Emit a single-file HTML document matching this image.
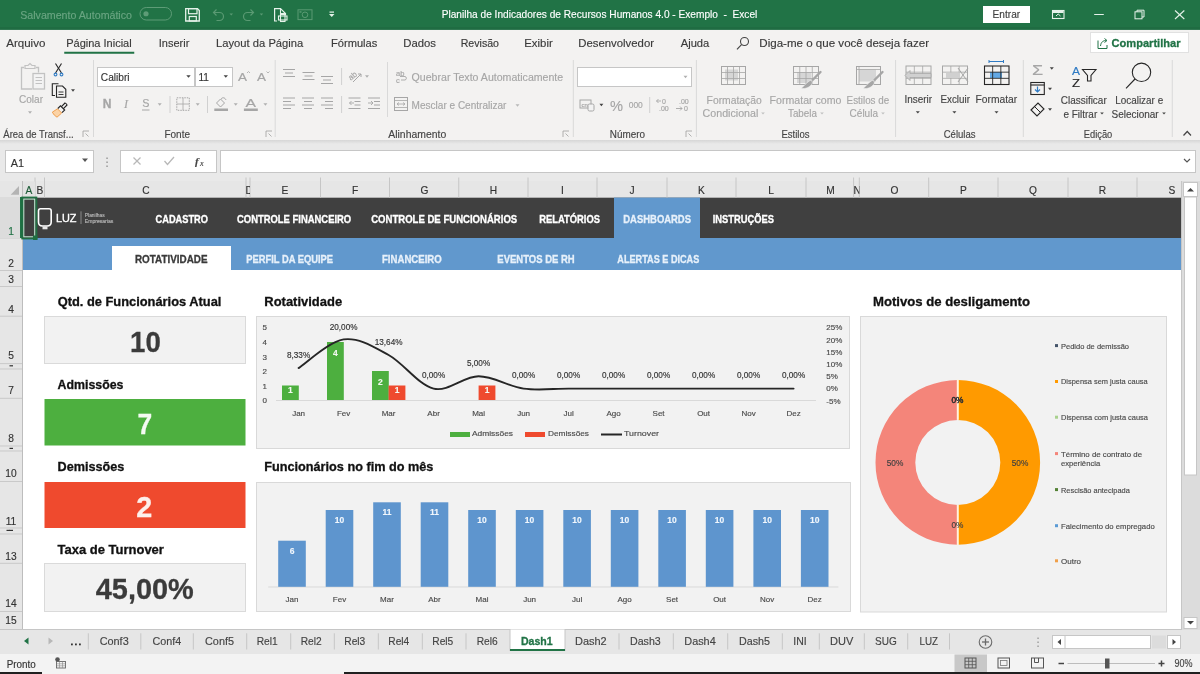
<!DOCTYPE html>
<html><head><meta charset="utf-8"><title>Excel</title>
<style>
html,body{margin:0;padding:0;width:1200px;height:674px;overflow:hidden;background:#fff;}
svg{display:block;font-family:"Liberation Sans", sans-serif;will-change:transform;}
</style></head><body>
<svg width="1200" height="674" viewBox="0 0 1200 674">
<rect x="0" y="29" width="1200" height="111" fill="#f3f2f1" />
<rect x="0" y="0" width="1200" height="29.7" fill="#217346" />
<rect x="0" y="27" width="1200" height="2.7" fill="#1f6c42" />
<defs><linearGradient id="sh" x1="0" y1="0" x2="0" y2="1"><stop offset="0" stop-color="#d6d6d6"/><stop offset="1" stop-color="#e9e9e9"/></linearGradient></defs>
<rect x="0" y="140" width="1200" height="4" fill="url(#sh)" />
<rect x="0" y="144" width="1200" height="37" fill="#e9e9e9" />
<rect x="5.5" y="150.5" width="88" height="22" fill="#fff" stroke="#c6c6c6" stroke-width="1" />
<rect x="120.5" y="150.5" width="96" height="22" fill="#fff" stroke="#c6c6c6" stroke-width="1" />
<rect x="220.5" y="150.5" width="975" height="22" fill="#fff" stroke="#c6c6c6" stroke-width="1" />
<rect x="0" y="181" width="1182" height="16" fill="#e6e6e6" />
<rect x="0" y="181" width="22" height="449" fill="#e6e6e6" />
<line x1="22.5" y1="181" x2="22.5" y2="630" stroke="#bdbdbd" stroke-width="1" />
<rect x="23" y="197" width="1159" height="433" fill="#ffffff" />
<rect x="23" y="197.6" width="1158" height="40.4" fill="#404040" />
<rect x="614" y="197.6" width="86" height="40.4" fill="#6198cd" />
<rect x="23" y="238" width="1158" height="32" fill="#6198cd" />
<rect x="112" y="246" width="119" height="24" fill="#ffffff" />
<rect x="44.5" y="316.5" width="201" height="47" fill="#f2f2f2" stroke="#dadada" stroke-width="1" />
<rect x="44.5" y="399" width="201" height="46.5" fill="#4daf3f" />
<rect x="44.5" y="482" width="201" height="46" fill="#ef4a2e" />
<rect x="44.5" y="563.5" width="201" height="48" fill="#f2f2f2" stroke="#dadada" stroke-width="1" />
<rect x="256.5" y="316.5" width="593" height="132" fill="#f2f2f2" stroke="#d9d9d9" stroke-width="1" />
<rect x="256.5" y="482.5" width="594" height="129" fill="#f2f2f2" stroke="#d9d9d9" stroke-width="1" />
<rect x="860.5" y="316.5" width="306" height="295.5" fill="#f2f2f2" stroke="#d9d9d9" stroke-width="1" />
<line x1="0" y1="629.5" x2="1182" y2="629.5" stroke="#c6c6c6" stroke-width="1" />
<rect x="0" y="630" width="1200" height="24" fill="#e6e6e6" />
<rect x="0" y="654" width="1200" height="20" fill="#f3f3f3" />
<rect x="0" y="672" width="42" height="2" fill="#202020" />
<rect x="344" y="672" width="856" height="2" fill="#202020" />
<rect x="1182" y="181" width="18" height="449" fill="#dcdcdc" />
<line x1="1181.5" y1="181" x2="1181.5" y2="630" stroke="#c6c6c6" stroke-width="1" />
<text x="20.2" y="18.8" font-size="11" fill="#6aa582" font-weight="normal" textLength="111.8" lengthAdjust="spacingAndGlyphs" stroke="#6aa582" stroke-width="0.15">Salvamento Automático</text>
<rect x="140" y="7.5" width="31.5" height="12.5" rx="6.25" fill="none" stroke="#5e9c77" stroke-width="1"/>
<circle cx="146" cy="13.75" r="2.6" fill="#5e9c77"/>
<text x="441.7" y="18.2" font-size="11.5" fill="#ffffff" font-weight="normal" textLength="315.6" lengthAdjust="spacingAndGlyphs" stroke="#ffffff" stroke-width="0.15">Planilha de Indicadores de Recursos Humanos 4.0 - Exemplo&#160; -&#160; Excel</text>
<rect x="983" y="6" width="47" height="17" fill="#ffffff"/>
<text x="992.6" y="18.2" font-size="11.5" fill="#404040" font-weight="normal" textLength="27.6" lengthAdjust="spacingAndGlyphs" stroke="#404040" stroke-width="0.15">Entrar</text>
<text x="6.2" y="47.1" font-size="11.3" fill="#3a3a3a" font-weight="normal" textLength="39.2" lengthAdjust="spacingAndGlyphs" stroke="#3a3a3a" stroke-width="0.15">Arquivo</text>
<text x="66.2" y="47.1" font-size="11.3" fill="#3a3a3a" font-weight="normal" textLength="65.5" lengthAdjust="spacingAndGlyphs" stroke="#3a3a3a" stroke-width="0.15">Página Inicial</text>
<text x="158.8" y="47.1" font-size="11.3" fill="#3a3a3a" font-weight="normal" textLength="30.5" lengthAdjust="spacingAndGlyphs" stroke="#3a3a3a" stroke-width="0.15">Inserir</text>
<text x="216.0" y="47.1" font-size="11.3" fill="#3a3a3a" font-weight="normal" textLength="87.3" lengthAdjust="spacingAndGlyphs" stroke="#3a3a3a" stroke-width="0.15">Layout da Página</text>
<text x="331.0" y="47.1" font-size="11.3" fill="#3a3a3a" font-weight="normal" textLength="46.3" lengthAdjust="spacingAndGlyphs" stroke="#3a3a3a" stroke-width="0.15">Fórmulas</text>
<text x="403.3" y="47.1" font-size="11.3" fill="#3a3a3a" font-weight="normal" textLength="32.7" lengthAdjust="spacingAndGlyphs" stroke="#3a3a3a" stroke-width="0.15">Dados</text>
<text x="460.7" y="47.1" font-size="11.3" fill="#3a3a3a" font-weight="normal" textLength="38.3" lengthAdjust="spacingAndGlyphs" stroke="#3a3a3a" stroke-width="0.15">Revisão</text>
<text x="524.3" y="47.1" font-size="11.3" fill="#3a3a3a" font-weight="normal" textLength="28.4" lengthAdjust="spacingAndGlyphs" stroke="#3a3a3a" stroke-width="0.15">Exibir</text>
<text x="578.3" y="47.1" font-size="11.3" fill="#3a3a3a" font-weight="normal" textLength="75.7" lengthAdjust="spacingAndGlyphs" stroke="#3a3a3a" stroke-width="0.15">Desenvolvedor</text>
<text x="680.7" y="47.1" font-size="11.3" fill="#3a3a3a" font-weight="normal" textLength="28.6" lengthAdjust="spacingAndGlyphs" stroke="#3a3a3a" stroke-width="0.15">Ajuda</text>
<text x="759.3" y="47.1" font-size="11.3" fill="#3a3a3a" font-weight="normal" textLength="169.7" lengthAdjust="spacingAndGlyphs" stroke="#3a3a3a" stroke-width="0.15">Diga-me o que você deseja fazer</text>
<rect x="64.25" y="51.75" width="70" height="2" fill="#217346" />
<rect x="1090.5" y="32.5" width="98" height="20" fill="#ffffff" stroke="#e1e1e1" stroke-width="1" />
<text x="1111.5" y="47.0" font-size="11.5" fill="#217346" font-weight="600" textLength="69.0" lengthAdjust="spacingAndGlyphs" stroke="#217346" stroke-width="0.3">Compartilhar</text>
<text x="3.3" y="137.6" font-size="11" fill="#444" font-weight="normal" textLength="70.4" lengthAdjust="spacingAndGlyphs" stroke="#444" stroke-width="0.15">Área de Transf...</text>
<text x="164.4" y="137.6" font-size="11" fill="#444" font-weight="normal" textLength="25.6" lengthAdjust="spacingAndGlyphs" stroke="#444" stroke-width="0.15">Fonte</text>
<text x="388.3" y="137.6" font-size="11" fill="#444" font-weight="normal" textLength="57.9" lengthAdjust="spacingAndGlyphs" stroke="#444" stroke-width="0.15">Alinhamento</text>
<text x="609.8" y="137.6" font-size="11" fill="#444" font-weight="normal" textLength="35.2" lengthAdjust="spacingAndGlyphs" stroke="#444" stroke-width="0.15">Número</text>
<text x="781.4" y="137.6" font-size="11" fill="#444" font-weight="normal" textLength="28.1" lengthAdjust="spacingAndGlyphs" stroke="#444" stroke-width="0.15">Estilos</text>
<text x="943.7" y="137.6" font-size="11" fill="#444" font-weight="normal" textLength="31.8" lengthAdjust="spacingAndGlyphs" stroke="#444" stroke-width="0.15">Células</text>
<text x="1083.8" y="137.6" font-size="11" fill="#444" font-weight="normal" textLength="28.5" lengthAdjust="spacingAndGlyphs" stroke="#444" stroke-width="0.15">Edição</text>
<line x1="93.5" y1="60" x2="93.5" y2="137" stroke="#d9d9d9" stroke-width="1" />
<line x1="275.2" y1="60" x2="275.2" y2="137" stroke="#d9d9d9" stroke-width="1" />
<line x1="573.3" y1="60" x2="573.3" y2="137" stroke="#d9d9d9" stroke-width="1" />
<line x1="696.4" y1="60" x2="696.4" y2="137" stroke="#d9d9d9" stroke-width="1" />
<line x1="895.6" y1="60" x2="895.6" y2="137" stroke="#d9d9d9" stroke-width="1" />
<line x1="1023.3" y1="60" x2="1023.3" y2="137" stroke="#d9d9d9" stroke-width="1" />
<line x1="1172.25" y1="60" x2="1172.25" y2="137" stroke="#d9d9d9" stroke-width="1" />
<text x="19.0" y="103.0" font-size="11" fill="#a6a6a6" font-weight="normal" textLength="24.0" lengthAdjust="spacingAndGlyphs" stroke="#a6a6a6" stroke-width="0.15">Colar</text>
<text x="411.6" y="81.0" font-size="11" fill="#a6a6a6" font-weight="normal" textLength="151.6" lengthAdjust="spacingAndGlyphs" stroke="#a6a6a6" stroke-width="0.15">Quebrar Texto Automaticamente</text>
<text x="411.6" y="109.4" font-size="11" fill="#a6a6a6" font-weight="normal" textLength="94.8" lengthAdjust="spacingAndGlyphs" stroke="#a6a6a6" stroke-width="0.15">Mesclar e Centralizar</text>
<text x="706.6" y="103.6" font-size="11" fill="#a6a6a6" font-weight="normal" textLength="55.2" lengthAdjust="spacingAndGlyphs" stroke="#a6a6a6" stroke-width="0.15">Formatação</text>
<text x="702.6" y="117.1" font-size="11" fill="#a6a6a6" font-weight="normal" textLength="55.7" lengthAdjust="spacingAndGlyphs" stroke="#a6a6a6" stroke-width="0.15">Condicional</text>
<text x="769.6" y="103.6" font-size="11" fill="#a6a6a6" font-weight="normal" textLength="71.8" lengthAdjust="spacingAndGlyphs" stroke="#a6a6a6" stroke-width="0.15">Formatar como</text>
<text x="788.0" y="117.1" font-size="11" fill="#a6a6a6" font-weight="normal" textLength="28.9" lengthAdjust="spacingAndGlyphs" stroke="#a6a6a6" stroke-width="0.15">Tabela</text>
<text x="846.6" y="103.6" font-size="11" fill="#a6a6a6" font-weight="normal" textLength="42.6" lengthAdjust="spacingAndGlyphs" stroke="#a6a6a6" stroke-width="0.15">Estilos de</text>
<text x="849.6" y="117.1" font-size="11" fill="#a6a6a6" font-weight="normal" textLength="28.4" lengthAdjust="spacingAndGlyphs" stroke="#a6a6a6" stroke-width="0.15">Célula</text>
<text x="904.4" y="103.1" font-size="11" fill="#444" font-weight="normal" textLength="27.6" lengthAdjust="spacingAndGlyphs" stroke="#444" stroke-width="0.15">Inserir</text>
<text x="940.5" y="103.1" font-size="11" fill="#444" font-weight="normal" textLength="29.4" lengthAdjust="spacingAndGlyphs" stroke="#444" stroke-width="0.15">Excluir</text>
<text x="975.5" y="103.1" font-size="11" fill="#444" font-weight="normal" textLength="41.7" lengthAdjust="spacingAndGlyphs" stroke="#444" stroke-width="0.15">Formatar</text>
<text x="1060.8" y="103.5" font-size="11" fill="#444" font-weight="normal" textLength="45.9" lengthAdjust="spacingAndGlyphs" stroke="#444" stroke-width="0.15">Classificar</text>
<text x="1063.5" y="117.5" font-size="11" fill="#444" font-weight="normal" textLength="33.7" lengthAdjust="spacingAndGlyphs" stroke="#444" stroke-width="0.15">e Filtrar</text>
<text x="1115.2" y="103.5" font-size="11" fill="#444" font-weight="normal" textLength="48.0" lengthAdjust="spacingAndGlyphs" stroke="#444" stroke-width="0.15">Localizar e</text>
<text x="1111.5" y="117.5" font-size="11" fill="#444" font-weight="normal" textLength="47.2" lengthAdjust="spacingAndGlyphs" stroke="#444" stroke-width="0.15">Selecionar</text>
<rect x="97.5" y="67.5" width="97" height="19" fill="#ffffff" stroke="#c6c6c6" stroke-width="1" />
<rect x="195.5" y="67.5" width="37" height="19" fill="#ffffff" stroke="#c6c6c6" stroke-width="1" />
<text x="100.8" y="81.2" font-size="11.5" fill="#333" font-weight="normal" textLength="28.8" lengthAdjust="spacingAndGlyphs" stroke="#333" stroke-width="0.15">Calibri</text>
<text x="198.5" y="81.2" font-size="11.5" fill="#333" font-weight="normal" textLength="10.5" lengthAdjust="spacingAndGlyphs" stroke="#333" stroke-width="0.15">11</text>
<rect x="577.5" y="67.5" width="114" height="19" fill="#ffffff" stroke="#c6c6c6" stroke-width="1" />
<text x="10.7" y="166.7" font-size="11.5" fill="#333" font-weight="normal" textLength="13.3" lengthAdjust="spacingAndGlyphs" stroke="#333" stroke-width="0.15">A1</text>
<line x1="35" y1="177.5" x2="35" y2="197.5" stroke="#c6c6c6" stroke-width="1" />
<line x1="44.5" y1="177.5" x2="44.5" y2="197.5" stroke="#c6c6c6" stroke-width="1" />
<line x1="246" y1="177.5" x2="246" y2="197.5" stroke="#c6c6c6" stroke-width="1" />
<line x1="250" y1="177.5" x2="250" y2="197.5" stroke="#c6c6c6" stroke-width="1" />
<line x1="320.5" y1="177.5" x2="320.5" y2="197.5" stroke="#c6c6c6" stroke-width="1" />
<line x1="389.5" y1="177.5" x2="389.5" y2="197.5" stroke="#c6c6c6" stroke-width="1" />
<line x1="458.75" y1="177.5" x2="458.75" y2="197.5" stroke="#c6c6c6" stroke-width="1" />
<line x1="528" y1="177.5" x2="528" y2="197.5" stroke="#c6c6c6" stroke-width="1" />
<line x1="597" y1="177.5" x2="597" y2="197.5" stroke="#c6c6c6" stroke-width="1" />
<line x1="667" y1="177.5" x2="667" y2="197.5" stroke="#c6c6c6" stroke-width="1" />
<line x1="736" y1="177.5" x2="736" y2="197.5" stroke="#c6c6c6" stroke-width="1" />
<line x1="806" y1="177.5" x2="806" y2="197.5" stroke="#c6c6c6" stroke-width="1" />
<line x1="853.6" y1="177.5" x2="853.6" y2="197.5" stroke="#c6c6c6" stroke-width="1" />
<line x1="859.3" y1="177.5" x2="859.3" y2="197.5" stroke="#c6c6c6" stroke-width="1" />
<line x1="928.7" y1="177.5" x2="928.7" y2="197.5" stroke="#c6c6c6" stroke-width="1" />
<line x1="998" y1="177.5" x2="998" y2="197.5" stroke="#c6c6c6" stroke-width="1" />
<line x1="1068" y1="177.5" x2="1068" y2="197.5" stroke="#c6c6c6" stroke-width="1" />
<line x1="1137" y1="177.5" x2="1137" y2="197.5" stroke="#c6c6c6" stroke-width="1" />
<clipPath id="cD"><rect x="246" y="181" width="4" height="16"/></clipPath><clipPath id="cN"><rect x="853.6" y="181" width="5.7" height="16"/></clipPath>
<g clip-path="url(#cD)"><text x="245.5" y="193.7" font-size="10.2" fill="#333" stroke="#333" stroke-width="0.15">D</text></g>
<g clip-path="url(#cN)"><text x="853.5" y="193.7" font-size="10.2" fill="#333" stroke="#333" stroke-width="0.15">N</text></g>
<text x="40.0" y="193.7" font-size="10.2" fill="#333" font-weight="normal" text-anchor="middle" stroke="#333" stroke-width="0.15">B</text>
<text x="146.0" y="193.7" font-size="10.2" fill="#333" font-weight="normal" text-anchor="middle" stroke="#333" stroke-width="0.15">C</text>
<text x="285.0" y="193.7" font-size="10.2" fill="#333" font-weight="normal" text-anchor="middle" stroke="#333" stroke-width="0.15">E</text>
<text x="355.0" y="193.7" font-size="10.2" fill="#333" font-weight="normal" text-anchor="middle" stroke="#333" stroke-width="0.15">F</text>
<text x="424.5" y="193.7" font-size="10.2" fill="#333" font-weight="normal" text-anchor="middle" stroke="#333" stroke-width="0.15">G</text>
<text x="493.5" y="193.7" font-size="10.2" fill="#333" font-weight="normal" text-anchor="middle" stroke="#333" stroke-width="0.15">H</text>
<text x="562.5" y="193.7" font-size="10.2" fill="#333" font-weight="normal" text-anchor="middle" stroke="#333" stroke-width="0.15">I</text>
<text x="632.0" y="193.7" font-size="10.2" fill="#333" font-weight="normal" text-anchor="middle" stroke="#333" stroke-width="0.15">J</text>
<text x="701.5" y="193.7" font-size="10.2" fill="#333" font-weight="normal" text-anchor="middle" stroke="#333" stroke-width="0.15">K</text>
<text x="771.0" y="193.7" font-size="10.2" fill="#333" font-weight="normal" text-anchor="middle" stroke="#333" stroke-width="0.15">L</text>
<text x="830.4" y="193.7" font-size="10.2" fill="#333" font-weight="normal" text-anchor="middle" stroke="#333" stroke-width="0.15">M</text>
<text x="894.4" y="193.7" font-size="10.2" fill="#333" font-weight="normal" text-anchor="middle" stroke="#333" stroke-width="0.15">O</text>
<text x="963.5" y="193.7" font-size="10.2" fill="#333" font-weight="normal" text-anchor="middle" stroke="#333" stroke-width="0.15">P</text>
<text x="1033.0" y="193.7" font-size="10.2" fill="#333" font-weight="normal" text-anchor="middle" stroke="#333" stroke-width="0.15">Q</text>
<text x="1102.5" y="193.7" font-size="10.2" fill="#333" font-weight="normal" text-anchor="middle" stroke="#333" stroke-width="0.15">R</text>
<text x="1172.0" y="193.7" font-size="10.2" fill="#333" font-weight="normal" text-anchor="middle" stroke="#333" stroke-width="0.15">S</text>
<rect x="23" y="181.5" width="12" height="15.5" fill="#e2e2e2" />
<text x="28.8" y="193.7" font-size="10.2" fill="#1d5c38" font-weight="normal" text-anchor="middle" stroke="#1d5c38" stroke-width="0.15">A</text>
<line x1="0" y1="238" x2="22" y2="238" stroke="#c9c9c9" stroke-width="1" />
<line x1="0" y1="270.5" x2="22" y2="270.5" stroke="#c9c9c9" stroke-width="1" />
<line x1="0" y1="286.5" x2="22" y2="286.5" stroke="#c9c9c9" stroke-width="1" />
<line x1="0" y1="316.2" x2="22" y2="316.2" stroke="#c9c9c9" stroke-width="1" />
<line x1="0" y1="363.6" x2="22" y2="363.6" stroke="#c9c9c9" stroke-width="1" />
<line x1="0" y1="369" x2="22" y2="369" stroke="#c9c9c9" stroke-width="1" />
<line x1="0" y1="398.3" x2="22" y2="398.3" stroke="#c9c9c9" stroke-width="1" />
<line x1="0" y1="446" x2="22" y2="446" stroke="#c9c9c9" stroke-width="1" />
<line x1="0" y1="451" x2="22" y2="451" stroke="#c9c9c9" stroke-width="1" />
<line x1="0" y1="481.5" x2="22" y2="481.5" stroke="#c9c9c9" stroke-width="1" />
<line x1="0" y1="528" x2="22" y2="528" stroke="#c9c9c9" stroke-width="1" />
<line x1="0" y1="534" x2="22" y2="534" stroke="#c9c9c9" stroke-width="1" />
<line x1="0" y1="563.3" x2="22" y2="563.3" stroke="#c9c9c9" stroke-width="1" />
<line x1="0" y1="611.5" x2="22" y2="611.5" stroke="#c9c9c9" stroke-width="1" />
<rect x="0" y="197" width="22" height="41" fill="#dcdcdc" />
<rect x="9.5" y="365.2" width="3.5" height="1.2" fill="#333" />
<rect x="9.5" y="447.8" width="3.5" height="1.2" fill="#333" />
<rect x="9.5" y="529.8" width="3.5" height="1.2" fill="#333" />
<rect x="6.5" y="529.8" width="3.5" height="1.2" fill="#333" />
<line x1="21" y1="197" x2="21" y2="238" stroke="#217346" stroke-width="2" />
<text x="11.0" y="235.3" font-size="10.2" fill="#217346" font-weight="normal" text-anchor="middle" stroke="#217346" stroke-width="0.15">1</text>
<text x="11.0" y="267.2" font-size="10.2" fill="#333" font-weight="normal" text-anchor="middle" stroke="#333" stroke-width="0.15">2</text>
<text x="11.0" y="282.7" font-size="10.2" fill="#333" font-weight="normal" text-anchor="middle" stroke="#333" stroke-width="0.15">3</text>
<text x="11.0" y="312.5" font-size="10.2" fill="#333" font-weight="normal" text-anchor="middle" stroke="#333" stroke-width="0.15">4</text>
<text x="11.0" y="359.2" font-size="10.2" fill="#333" font-weight="normal" text-anchor="middle" stroke="#333" stroke-width="0.15">5</text>
<text x="11.0" y="394.3" font-size="10.2" fill="#333" font-weight="normal" text-anchor="middle" stroke="#333" stroke-width="0.15">7</text>
<text x="11.0" y="441.7" font-size="10.2" fill="#333" font-weight="normal" text-anchor="middle" stroke="#333" stroke-width="0.15">8</text>
<text x="11.0" y="477.1" font-size="10.2" fill="#333" font-weight="normal" text-anchor="middle" stroke="#333" stroke-width="0.15">10</text>
<text x="11.0" y="524.6" font-size="10.2" fill="#333" font-weight="normal" text-anchor="middle" stroke="#333" stroke-width="0.15">11</text>
<text x="11.0" y="559.9" font-size="10.2" fill="#333" font-weight="normal" text-anchor="middle" stroke="#333" stroke-width="0.15">13</text>
<text x="11.0" y="607.3" font-size="10.2" fill="#333" font-weight="normal" text-anchor="middle" stroke="#333" stroke-width="0.15">14</text>
<text x="11.0" y="623.7" font-size="10.2" fill="#333" font-weight="normal" text-anchor="middle" stroke="#333" stroke-width="0.15">15</text>
<text x="155.5" y="223.0" font-size="10" fill="#ffffff" font-weight="bold" textLength="52.5" lengthAdjust="spacingAndGlyphs" stroke="#ffffff" stroke-width="0.3">CADASTRO</text>
<text x="237.0" y="223.0" font-size="10" fill="#ffffff" font-weight="bold" textLength="114.2" lengthAdjust="spacingAndGlyphs" stroke="#ffffff" stroke-width="0.3">CONTROLE FINANCEIRO</text>
<text x="371.2" y="223.0" font-size="10" fill="#ffffff" font-weight="bold" textLength="146.0" lengthAdjust="spacingAndGlyphs" stroke="#ffffff" stroke-width="0.3">CONTROLE DE FUNCIONÁRIOS</text>
<text x="539.3" y="223.0" font-size="10" fill="#ffffff" font-weight="bold" textLength="60.7" lengthAdjust="spacingAndGlyphs" stroke="#ffffff" stroke-width="0.3">RELATÓRIOS</text>
<text x="623.3" y="223.0" font-size="10" fill="#e6f0fa" font-weight="bold" textLength="67.7" lengthAdjust="spacingAndGlyphs" stroke="#e6f0fa" stroke-width="0.3">DASHBOARDS</text>
<text x="712.7" y="223.0" font-size="10" fill="#ffffff" font-weight="bold" textLength="61.3" lengthAdjust="spacingAndGlyphs" stroke="#ffffff" stroke-width="0.3">INSTRUÇÕES</text>
<text x="135.0" y="263.2" font-size="10.4" fill="#3a3a3a" font-weight="bold" textLength="72.5" lengthAdjust="spacingAndGlyphs" stroke="#3a3a3a" stroke-width="0.3">ROTATIVIDADE</text>
<text x="246.2" y="263.2" font-size="10.4" fill="#e6f0fa" font-weight="bold" textLength="86.8" lengthAdjust="spacingAndGlyphs" stroke="#e6f0fa" stroke-width="0.3">PERFIL DA EQUIPE</text>
<text x="382.0" y="263.2" font-size="10.4" fill="#e6f0fa" font-weight="bold" textLength="59.7" lengthAdjust="spacingAndGlyphs" stroke="#e6f0fa" stroke-width="0.3">FINANCEIRO</text>
<text x="497.3" y="263.2" font-size="10.4" fill="#e6f0fa" font-weight="bold" textLength="77.4" lengthAdjust="spacingAndGlyphs" stroke="#e6f0fa" stroke-width="0.3">EVENTOS DE RH</text>
<text x="617.3" y="263.2" font-size="10.4" fill="#e6f0fa" font-weight="bold" textLength="82.0" lengthAdjust="spacingAndGlyphs" stroke="#e6f0fa" stroke-width="0.3">ALERTAS E DICAS</text>
<rect x="22.2" y="197.5" width="14.2" height="41" fill="none" stroke="#1f6f42" stroke-width="1.8"/>
<rect x="23.8" y="199.1" width="10.9" height="37.7" fill="none" stroke="#c4f2d8" stroke-width="1"/>
<rect x="33" y="235.5" width="4.5" height="4.5" fill="#1f6f42" />
<path d="M40.5,208.8 H49 Q51.2,208.8 51.2,211 V222 Q51.2,226 47,226 H42.5 Q38.5,226 38.5,222 V211 Q38.5,208.8 40.5,208.8 Z" fill="none" stroke="#ffffff" stroke-width="1.6"/>
<rect x="42.5" y="226.5" width="5" height="2.8" fill="#e8e8e8" />
<text x="55.9" y="221.9" font-size="11.5" fill="#ffffff" stroke="#ffffff" stroke-width="0.35" textLength="20.6" lengthAdjust="spacingAndGlyphs">LUZ</text>
<line x1="81" y1="211.3" x2="81" y2="224" stroke="#8a8a8a" stroke-width="1" />
<text x="84.8" y="217.3" font-size="5.2" fill="#b8b8b8" font-weight="normal" textLength="19.8" lengthAdjust="spacingAndGlyphs" stroke="#b8b8b8" stroke-width="0.15">Planilhas</text>
<text x="84.8" y="222.5" font-size="5.2" fill="#b8b8b8" font-weight="normal" textLength="28.5" lengthAdjust="spacingAndGlyphs" stroke="#b8b8b8" stroke-width="0.15">Empresarias</text>
<text x="57.7" y="305.8" font-size="12.4" fill="#111111" font-weight="bold" textLength="163.7" lengthAdjust="spacingAndGlyphs" stroke="#111111" stroke-width="0.3">Qtd. de Funcionários Atual</text>
<text x="57.6" y="388.8" font-size="12.4" fill="#111111" font-weight="bold" textLength="65.8" lengthAdjust="spacingAndGlyphs" stroke="#111111" stroke-width="0.3">Admissões</text>
<text x="57.6" y="471.2" font-size="12.4" fill="#111111" font-weight="bold" textLength="66.7" lengthAdjust="spacingAndGlyphs" stroke="#111111" stroke-width="0.3">Demissões</text>
<text x="57.5" y="553.5" font-size="12.4" fill="#111111" font-weight="bold" textLength="106.4" lengthAdjust="spacingAndGlyphs" stroke="#111111" stroke-width="0.3">Taxa de Turnover</text>
<text x="130.1" y="352.0" font-size="29.5" fill="#3b3b3b" font-weight="bold" textLength="30.7" lengthAdjust="spacingAndGlyphs" stroke="#3b3b3b" stroke-width="0.3">10</text>
<text x="137.6" y="434.4" font-size="30" fill="#f4faf2" font-weight="bold" textLength="14.7" lengthAdjust="spacingAndGlyphs" stroke="#f4faf2" stroke-width="0.3">7</text>
<text x="136.3" y="516.5" font-size="30" fill="#fdf0ec" font-weight="bold" textLength="16.0" lengthAdjust="spacingAndGlyphs" stroke="#fdf0ec" stroke-width="0.3">2</text>
<text x="95.8" y="599.1" font-size="29.5" fill="#3b3b3b" font-weight="bold" textLength="98.0" lengthAdjust="spacingAndGlyphs" stroke="#3b3b3b" stroke-width="0.3">45,00%</text>
<text x="264.3" y="306.0" font-size="12.8" fill="#111111" font-weight="bold" textLength="77.8" lengthAdjust="spacingAndGlyphs" stroke="#111111" stroke-width="0.3">Rotatividade</text>
<text x="264.2" y="471.2" font-size="12.8" fill="#111111" font-weight="bold" textLength="169.2" lengthAdjust="spacingAndGlyphs" stroke="#111111" stroke-width="0.3">Funcionários no fim do mês</text>
<text x="873.0" y="306.3" font-size="12.8" fill="#111111" font-weight="bold" textLength="157.0" lengthAdjust="spacingAndGlyphs" stroke="#111111" stroke-width="0.3">Motivos de desligamento</text>
<text x="267" y="330.3" font-size="8" fill="#4a4a4a" text-anchor="end" stroke="#4a4a4a" stroke-width="0.15">5</text>
<text x="267" y="344.9" font-size="8" fill="#4a4a4a" text-anchor="end" stroke="#4a4a4a" stroke-width="0.15">4</text>
<text x="267" y="359.5" font-size="8" fill="#4a4a4a" text-anchor="end" stroke="#4a4a4a" stroke-width="0.15">3</text>
<text x="267" y="374.2" font-size="8" fill="#4a4a4a" text-anchor="end" stroke="#4a4a4a" stroke-width="0.15">2</text>
<text x="267" y="388.8" font-size="8" fill="#4a4a4a" text-anchor="end" stroke="#4a4a4a" stroke-width="0.15">1</text>
<text x="267" y="403.4" font-size="8" fill="#4a4a4a" text-anchor="end" stroke="#4a4a4a" stroke-width="0.15">0</text>
<text x="826.3" y="330.3" font-size="8" fill="#4a4a4a" stroke="#4a4a4a" stroke-width="0.15">25%</text>
<text x="826.3" y="342.5" font-size="8" fill="#4a4a4a" stroke="#4a4a4a" stroke-width="0.15">20%</text>
<text x="826.3" y="354.7" font-size="8" fill="#4a4a4a" stroke="#4a4a4a" stroke-width="0.15">15%</text>
<text x="826.3" y="366.9" font-size="8" fill="#4a4a4a" stroke="#4a4a4a" stroke-width="0.15">10%</text>
<text x="826.3" y="379.1" font-size="8" fill="#4a4a4a" stroke="#4a4a4a" stroke-width="0.15">5%</text>
<text x="826.3" y="391.3" font-size="8" fill="#4a4a4a" stroke="#4a4a4a" stroke-width="0.15">0%</text>
<text x="826.3" y="403.5" font-size="8" fill="#4a4a4a" stroke="#4a4a4a" stroke-width="0.15">-5%</text>
<line x1="276" y1="400.5" x2="816" y2="400.5" stroke="#d9d9d9" stroke-width="1" />
<text x="298.6" y="416.3" font-size="8" fill="#4a4a4a" text-anchor="middle" stroke="#4a4a4a" stroke-width="0.15">Jan</text>
<text x="343.6" y="416.3" font-size="8" fill="#4a4a4a" text-anchor="middle" stroke="#4a4a4a" stroke-width="0.15">Fev</text>
<text x="388.6" y="416.3" font-size="8" fill="#4a4a4a" text-anchor="middle" stroke="#4a4a4a" stroke-width="0.15">Mar</text>
<text x="433.6" y="416.3" font-size="8" fill="#4a4a4a" text-anchor="middle" stroke="#4a4a4a" stroke-width="0.15">Abr</text>
<text x="478.6" y="416.3" font-size="8" fill="#4a4a4a" text-anchor="middle" stroke="#4a4a4a" stroke-width="0.15">Mai</text>
<text x="523.6" y="416.3" font-size="8" fill="#4a4a4a" text-anchor="middle" stroke="#4a4a4a" stroke-width="0.15">Jun</text>
<text x="568.6" y="416.3" font-size="8" fill="#4a4a4a" text-anchor="middle" stroke="#4a4a4a" stroke-width="0.15">Jul</text>
<text x="613.6" y="416.3" font-size="8" fill="#4a4a4a" text-anchor="middle" stroke="#4a4a4a" stroke-width="0.15">Ago</text>
<text x="658.6" y="416.3" font-size="8" fill="#4a4a4a" text-anchor="middle" stroke="#4a4a4a" stroke-width="0.15">Set</text>
<text x="703.6" y="416.3" font-size="8" fill="#4a4a4a" text-anchor="middle" stroke="#4a4a4a" stroke-width="0.15">Out</text>
<text x="748.6" y="416.3" font-size="8" fill="#4a4a4a" text-anchor="middle" stroke="#4a4a4a" stroke-width="0.15">Nov</text>
<text x="793.6" y="416.3" font-size="8" fill="#4a4a4a" text-anchor="middle" stroke="#4a4a4a" stroke-width="0.15">Dez</text>
<rect x="282.0" y="385.5" width="16.8" height="14.5" fill="#4daf3f" />
<text x="290.4" y="393.2" font-size="8.5" fill="#f2f8f0" font-weight="bold" text-anchor="middle" stroke="#f2f8f0" stroke-width="0.15">1</text>
<rect x="327.0" y="342.0" width="16.8" height="58.0" fill="#4daf3f" />
<text x="335.4" y="356.2" font-size="8.5" fill="#f2f8f0" font-weight="bold" text-anchor="middle" stroke="#f2f8f0" stroke-width="0.15">4</text>
<rect x="372.0" y="371.0" width="16.8" height="29.0" fill="#4daf3f" />
<text x="380.4" y="385.2" font-size="8.5" fill="#f2f8f0" font-weight="bold" text-anchor="middle" stroke="#f2f8f0" stroke-width="0.15">2</text>
<rect x="388.6" y="385.5" width="16.8" height="14.5" fill="#ef4a2e" />
<text x="397.0" y="393.2" font-size="8.5" fill="#f2f8f0" font-weight="bold" text-anchor="middle" stroke="#f2f8f0" stroke-width="0.15">1</text>
<rect x="478.6" y="385.5" width="16.8" height="14.5" fill="#ef4a2e" />
<text x="487.0" y="393.2" font-size="8.5" fill="#f2f8f0" font-weight="bold" text-anchor="middle" stroke="#f2f8f0" stroke-width="0.15">1</text>
<path d="M298.6,368.1 C306.1,363.3 328.6,341.6 343.6,339.4 C358.6,337.2 373.6,346.8 388.6,355.0 C403.6,363.2 418.6,385.1 433.6,388.6 C448.6,392.1 463.6,376.3 478.6,376.3 C493.6,376.3 508.6,386.6 523.6,388.6 C538.6,390.7 553.6,388.6 568.6,388.6 C583.6,388.6 598.6,388.6 613.6,388.6 C628.6,388.6 643.6,388.6 658.6,388.6 C673.6,388.6 688.6,388.6 703.6,388.6 C718.6,388.6 733.6,388.6 748.6,388.6 C763.6,388.6 786.1,388.6 793.6,388.6" fill="none" stroke="#262626" stroke-width="1.9" stroke-linecap="round"/>
<text x="298.6" y="357.9" font-size="8.2" fill="#333333" text-anchor="middle" stroke="#333333" stroke-width="0.15">8,33%</text>
<text x="343.6" y="329.9" font-size="8.2" fill="#333333" text-anchor="middle" stroke="#333333" stroke-width="0.15">20,00%</text>
<text x="388.6" y="344.9" font-size="8.2" fill="#333333" text-anchor="middle" stroke="#333333" stroke-width="0.15">13,64%</text>
<text x="433.6" y="378.1" font-size="8.2" fill="#333333" text-anchor="middle" stroke="#333333" stroke-width="0.15">0,00%</text>
<text x="478.6" y="365.7" font-size="8.2" fill="#333333" text-anchor="middle" stroke="#333333" stroke-width="0.15">5,00%</text>
<text x="523.6" y="378.1" font-size="8.2" fill="#333333" text-anchor="middle" stroke="#333333" stroke-width="0.15">0,00%</text>
<text x="568.6" y="378.1" font-size="8.2" fill="#333333" text-anchor="middle" stroke="#333333" stroke-width="0.15">0,00%</text>
<text x="613.6" y="378.1" font-size="8.2" fill="#333333" text-anchor="middle" stroke="#333333" stroke-width="0.15">0,00%</text>
<text x="658.6" y="378.1" font-size="8.2" fill="#333333" text-anchor="middle" stroke="#333333" stroke-width="0.15">0,00%</text>
<text x="703.6" y="378.1" font-size="8.2" fill="#333333" text-anchor="middle" stroke="#333333" stroke-width="0.15">0,00%</text>
<text x="748.6" y="378.1" font-size="8.2" fill="#333333" text-anchor="middle" stroke="#333333" stroke-width="0.15">0,00%</text>
<text x="793.6" y="378.1" font-size="8.2" fill="#333333" text-anchor="middle" stroke="#333333" stroke-width="0.15">0,00%</text>
<rect x="450" y="432" width="20" height="5" fill="#4daf3f" />
<text x="472.0" y="436.3" font-size="8" fill="#4a4a4a" font-weight="normal" textLength="41.0" lengthAdjust="spacingAndGlyphs" stroke="#4a4a4a" stroke-width="0.15">Admissões</text>
<rect x="525" y="432" width="20" height="5" fill="#ef4a2e" />
<text x="548.0" y="436.3" font-size="8" fill="#4a4a4a" font-weight="normal" textLength="41.0" lengthAdjust="spacingAndGlyphs" stroke="#4a4a4a" stroke-width="0.15">Demissões</text>
<line x1="601" y1="434.5" x2="622" y2="434.5" stroke="#262626" stroke-width="2" />
<text x="624.0" y="436.3" font-size="8" fill="#4a4a4a" font-weight="normal" textLength="35.0" lengthAdjust="spacingAndGlyphs" stroke="#4a4a4a" stroke-width="0.15">Turnover</text>
<line x1="268.2" y1="587" x2="838.4" y2="587" stroke="#d9d9d9" stroke-width="1" />
<rect x="278.2" y="540.7" width="27.6" height="46.1" fill="#5e95ce" />
<text x="292.0" y="553.8" font-size="8.5" fill="#f0f6fc" font-weight="bold" text-anchor="middle" stroke="#f0f6fc" stroke-width="0.15">6</text>
<text x="292.0" y="601.9" font-size="8" fill="#4a4a4a" text-anchor="middle" stroke="#4a4a4a" stroke-width="0.15">Jan</text>
<rect x="325.7" y="510.0" width="27.6" height="76.8" fill="#5e95ce" />
<text x="339.5" y="523.1" font-size="8.5" fill="#f0f6fc" font-weight="bold" text-anchor="middle" stroke="#f0f6fc" stroke-width="0.15">10</text>
<text x="339.5" y="601.9" font-size="8" fill="#4a4a4a" text-anchor="middle" stroke="#4a4a4a" stroke-width="0.15">Fev</text>
<rect x="373.2" y="502.3" width="27.6" height="84.5" fill="#5e95ce" />
<text x="387.0" y="515.4" font-size="8.5" fill="#f0f6fc" font-weight="bold" text-anchor="middle" stroke="#f0f6fc" stroke-width="0.15">11</text>
<text x="387.0" y="601.9" font-size="8" fill="#4a4a4a" text-anchor="middle" stroke="#4a4a4a" stroke-width="0.15">Mar</text>
<rect x="420.7" y="502.3" width="27.6" height="84.5" fill="#5e95ce" />
<text x="434.5" y="515.4" font-size="8.5" fill="#f0f6fc" font-weight="bold" text-anchor="middle" stroke="#f0f6fc" stroke-width="0.15">11</text>
<text x="434.5" y="601.9" font-size="8" fill="#4a4a4a" text-anchor="middle" stroke="#4a4a4a" stroke-width="0.15">Abr</text>
<rect x="468.2" y="510.0" width="27.6" height="76.8" fill="#5e95ce" />
<text x="482.0" y="523.1" font-size="8.5" fill="#f0f6fc" font-weight="bold" text-anchor="middle" stroke="#f0f6fc" stroke-width="0.15">10</text>
<text x="482.0" y="601.9" font-size="8" fill="#4a4a4a" text-anchor="middle" stroke="#4a4a4a" stroke-width="0.15">Mai</text>
<rect x="515.8" y="510.0" width="27.6" height="76.8" fill="#5e95ce" />
<text x="529.6" y="523.1" font-size="8.5" fill="#f0f6fc" font-weight="bold" text-anchor="middle" stroke="#f0f6fc" stroke-width="0.15">10</text>
<text x="529.6" y="601.9" font-size="8" fill="#4a4a4a" text-anchor="middle" stroke="#4a4a4a" stroke-width="0.15">Jun</text>
<rect x="563.3" y="510.0" width="27.6" height="76.8" fill="#5e95ce" />
<text x="577.1" y="523.1" font-size="8.5" fill="#f0f6fc" font-weight="bold" text-anchor="middle" stroke="#f0f6fc" stroke-width="0.15">10</text>
<text x="577.1" y="601.9" font-size="8" fill="#4a4a4a" text-anchor="middle" stroke="#4a4a4a" stroke-width="0.15">Jul</text>
<rect x="610.8" y="510.0" width="27.6" height="76.8" fill="#5e95ce" />
<text x="624.6" y="523.1" font-size="8.5" fill="#f0f6fc" font-weight="bold" text-anchor="middle" stroke="#f0f6fc" stroke-width="0.15">10</text>
<text x="624.6" y="601.9" font-size="8" fill="#4a4a4a" text-anchor="middle" stroke="#4a4a4a" stroke-width="0.15">Ago</text>
<rect x="658.3" y="510.0" width="27.6" height="76.8" fill="#5e95ce" />
<text x="672.1" y="523.1" font-size="8.5" fill="#f0f6fc" font-weight="bold" text-anchor="middle" stroke="#f0f6fc" stroke-width="0.15">10</text>
<text x="672.1" y="601.9" font-size="8" fill="#4a4a4a" text-anchor="middle" stroke="#4a4a4a" stroke-width="0.15">Set</text>
<rect x="705.8" y="510.0" width="27.6" height="76.8" fill="#5e95ce" />
<text x="719.6" y="523.1" font-size="8.5" fill="#f0f6fc" font-weight="bold" text-anchor="middle" stroke="#f0f6fc" stroke-width="0.15">10</text>
<text x="719.6" y="601.9" font-size="8" fill="#4a4a4a" text-anchor="middle" stroke="#4a4a4a" stroke-width="0.15">Out</text>
<rect x="753.4" y="510.0" width="27.6" height="76.8" fill="#5e95ce" />
<text x="767.2" y="523.1" font-size="8.5" fill="#f0f6fc" font-weight="bold" text-anchor="middle" stroke="#f0f6fc" stroke-width="0.15">10</text>
<text x="767.2" y="601.9" font-size="8" fill="#4a4a4a" text-anchor="middle" stroke="#4a4a4a" stroke-width="0.15">Nov</text>
<rect x="800.9" y="510.0" width="27.6" height="76.8" fill="#5e95ce" />
<text x="814.7" y="523.1" font-size="8.5" fill="#f0f6fc" font-weight="bold" text-anchor="middle" stroke="#f0f6fc" stroke-width="0.15">10</text>
<text x="814.7" y="601.9" font-size="8" fill="#4a4a4a" text-anchor="middle" stroke="#4a4a4a" stroke-width="0.15">Dez</text>
<path d="M957.8,380.09999999999997 A82.3,82.3 0 0 1 957.8,544.6999999999999 L957.8,504.9 A42.5,42.5 0 0 0 957.8,419.9 Z" fill="#ff9a00"/>
<path d="M957.8,380.09999999999997 A82.3,82.3 0 0 0 957.8,544.6999999999999 L957.8,504.9 A42.5,42.5 0 0 1 957.8,419.9 Z" fill="#f4857a"/>
<line x1="957.8" y1="379.59999999999997" x2="957.8" y2="419.9" stroke="#fff2dc" stroke-width="2" />
<line x1="957.8" y1="504.9" x2="957.8" y2="545.1999999999999" stroke="#fff2dc" stroke-width="2" />
<text x="957.5" y="403.0" font-size="8.3" fill="#404040" text-anchor="middle" stroke="#404040" stroke-width="0.15">0%</text>
<text x="957.5" y="528.0" font-size="8.3" fill="#404040" text-anchor="middle" stroke="#404040" stroke-width="0.15">0%</text>
<text x="895" y="466.0" font-size="8.3" fill="#404040" text-anchor="middle" stroke="#404040" stroke-width="0.15">50%</text>
<text x="1020" y="466.0" font-size="8.3" fill="#404040" text-anchor="middle" stroke="#404040" stroke-width="0.15">50%</text>
<text x="957.5" y="403" font-size="8.3" fill="#303030" stroke="#303030" stroke-width="0.3" text-anchor="middle">0%</text>
<rect x="1055" y="344.1" width="3" height="3" fill="#44546a" />
<text x="1061.0" y="348.5" font-size="8" fill="#4a4a4a" font-weight="normal" textLength="68.0" lengthAdjust="spacingAndGlyphs" stroke="#4a4a4a" stroke-width="0.15">Pedido de demissão</text>
<rect x="1055" y="380.0" width="3" height="3" fill="#ff9a00" />
<text x="1061.0" y="384.4" font-size="8" fill="#4a4a4a" font-weight="normal" textLength="86.6" lengthAdjust="spacingAndGlyphs" stroke="#4a4a4a" stroke-width="0.15">Dispensa sem justa causa</text>
<rect x="1055" y="415.7" width="3" height="3" fill="#a9d18e" />
<text x="1061.0" y="420.1" font-size="8" fill="#4a4a4a" font-weight="normal" textLength="87.0" lengthAdjust="spacingAndGlyphs" stroke="#4a4a4a" stroke-width="0.15">Dispensa com justa causa</text>
<rect x="1055" y="452.1" width="3" height="3" fill="#f4857a" />
<text x="1061.0" y="456.5" font-size="8" fill="#4a4a4a" font-weight="normal" textLength="81.0" lengthAdjust="spacingAndGlyphs" stroke="#4a4a4a" stroke-width="0.15">Término de contrato de</text>
<rect x="1055" y="488.1" width="3" height="3" fill="#548235" />
<text x="1061.0" y="492.5" font-size="8" fill="#4a4a4a" font-weight="normal" textLength="68.8" lengthAdjust="spacingAndGlyphs" stroke="#4a4a4a" stroke-width="0.15">Rescisão antecipada</text>
<rect x="1055" y="524.2" width="3" height="3" fill="#5b9bd5" />
<text x="1061.0" y="528.6" font-size="8" fill="#4a4a4a" font-weight="normal" textLength="93.7" lengthAdjust="spacingAndGlyphs" stroke="#4a4a4a" stroke-width="0.15">Falecimento do empregado</text>
<rect x="1055" y="559.3" width="3" height="3" fill="#f0a04a" />
<text x="1061.0" y="563.7" font-size="8" fill="#4a4a4a" font-weight="normal" textLength="20.0" lengthAdjust="spacingAndGlyphs" stroke="#4a4a4a" stroke-width="0.15">Outro</text>
<text x="1061.0" y="465.9" font-size="8" fill="#4a4a4a" font-weight="normal" textLength="39.2" lengthAdjust="spacingAndGlyphs" stroke="#4a4a4a" stroke-width="0.15">experiência</text>
<path d="M28.5,637.5 L24,641 L28.5,644.5 Z" fill="#217346"/>
<path d="M48.5,637.5 L53,641 L48.5,644.5 Z" fill="#b8b8b8"/>
<rect x="71" y="643.5" width="1.8" height="1.8" fill="#333" />
<rect x="75" y="643.5" width="1.8" height="1.8" fill="#333" />
<rect x="79" y="643.5" width="1.8" height="1.8" fill="#333" />
<line x1="88.3" y1="633.3" x2="88.3" y2="649.5" stroke="#c6c6c6" stroke-width="1" />
<line x1="140.8" y1="633.3" x2="140.8" y2="649.5" stroke="#c6c6c6" stroke-width="1" />
<line x1="193.3" y1="633.3" x2="193.3" y2="649.5" stroke="#c6c6c6" stroke-width="1" />
<line x1="246.7" y1="633.3" x2="246.7" y2="649.5" stroke="#c6c6c6" stroke-width="1" />
<line x1="290.7" y1="633.3" x2="290.7" y2="649.5" stroke="#c6c6c6" stroke-width="1" />
<line x1="334.3" y1="633.3" x2="334.3" y2="649.5" stroke="#c6c6c6" stroke-width="1" />
<line x1="378.3" y1="633.3" x2="378.3" y2="649.5" stroke="#c6c6c6" stroke-width="1" />
<line x1="422.3" y1="633.3" x2="422.3" y2="649.5" stroke="#c6c6c6" stroke-width="1" />
<line x1="466" y1="633.3" x2="466" y2="649.5" stroke="#c6c6c6" stroke-width="1" />
<line x1="619" y1="633.3" x2="619" y2="649.5" stroke="#c6c6c6" stroke-width="1" />
<line x1="673.3" y1="633.3" x2="673.3" y2="649.5" stroke="#c6c6c6" stroke-width="1" />
<line x1="727.7" y1="633.3" x2="727.7" y2="649.5" stroke="#c6c6c6" stroke-width="1" />
<line x1="782.3" y1="633.3" x2="782.3" y2="649.5" stroke="#c6c6c6" stroke-width="1" />
<line x1="819.3" y1="633.3" x2="819.3" y2="649.5" stroke="#c6c6c6" stroke-width="1" />
<line x1="864.3" y1="633.3" x2="864.3" y2="649.5" stroke="#c6c6c6" stroke-width="1" />
<line x1="907.7" y1="633.3" x2="907.7" y2="649.5" stroke="#c6c6c6" stroke-width="1" />
<line x1="949.5" y1="633.3" x2="949.5" y2="649.5" stroke="#c6c6c6" stroke-width="1" />
<text x="99.7" y="644.7" font-size="11" fill="#444" font-weight="normal" textLength="29.0" lengthAdjust="spacingAndGlyphs" stroke="#444" stroke-width="0.15">Conf3</text>
<text x="152.5" y="644.7" font-size="11" fill="#444" font-weight="normal" textLength="28.8" lengthAdjust="spacingAndGlyphs" stroke="#444" stroke-width="0.15">Conf4</text>
<text x="205.0" y="644.7" font-size="11" fill="#444" font-weight="normal" textLength="29.0" lengthAdjust="spacingAndGlyphs" stroke="#444" stroke-width="0.15">Conf5</text>
<text x="256.7" y="644.7" font-size="11" fill="#444" font-weight="normal" textLength="21.0" lengthAdjust="spacingAndGlyphs" stroke="#444" stroke-width="0.15">Rel1</text>
<text x="300.7" y="644.7" font-size="11" fill="#444" font-weight="normal" textLength="21.0" lengthAdjust="spacingAndGlyphs" stroke="#444" stroke-width="0.15">Rel2</text>
<text x="344.3" y="644.7" font-size="11" fill="#444" font-weight="normal" textLength="21.0" lengthAdjust="spacingAndGlyphs" stroke="#444" stroke-width="0.15">Rel3</text>
<text x="388.3" y="644.7" font-size="11" fill="#444" font-weight="normal" textLength="21.0" lengthAdjust="spacingAndGlyphs" stroke="#444" stroke-width="0.15">Rel4</text>
<text x="432.3" y="644.7" font-size="11" fill="#444" font-weight="normal" textLength="21.0" lengthAdjust="spacingAndGlyphs" stroke="#444" stroke-width="0.15">Rel5</text>
<text x="476.7" y="644.7" font-size="11" fill="#444" font-weight="normal" textLength="21.0" lengthAdjust="spacingAndGlyphs" stroke="#444" stroke-width="0.15">Rel6</text>
<text x="575.0" y="644.7" font-size="11" fill="#444" font-weight="normal" textLength="31.7" lengthAdjust="spacingAndGlyphs" stroke="#444" stroke-width="0.15">Dash2</text>
<text x="630.0" y="644.7" font-size="11" fill="#444" font-weight="normal" textLength="30.7" lengthAdjust="spacingAndGlyphs" stroke="#444" stroke-width="0.15">Dash3</text>
<text x="684.3" y="644.7" font-size="11" fill="#444" font-weight="normal" textLength="31.4" lengthAdjust="spacingAndGlyphs" stroke="#444" stroke-width="0.15">Dash4</text>
<text x="739.0" y="644.7" font-size="11" fill="#444" font-weight="normal" textLength="31.0" lengthAdjust="spacingAndGlyphs" stroke="#444" stroke-width="0.15">Dash5</text>
<text x="793.3" y="644.7" font-size="11" fill="#444" font-weight="normal" textLength="13.4" lengthAdjust="spacingAndGlyphs" stroke="#444" stroke-width="0.15">INI</text>
<text x="830.0" y="644.7" font-size="11" fill="#444" font-weight="normal" textLength="23.3" lengthAdjust="spacingAndGlyphs" stroke="#444" stroke-width="0.15">DUV</text>
<text x="875.0" y="644.7" font-size="11" fill="#444" font-weight="normal" textLength="21.7" lengthAdjust="spacingAndGlyphs" stroke="#444" stroke-width="0.15">SUG</text>
<text x="919.5" y="644.7" font-size="11" fill="#444" font-weight="normal" textLength="18.5" lengthAdjust="spacingAndGlyphs" stroke="#444" stroke-width="0.15">LUZ</text>
<rect x="510" y="629.5" width="55" height="20" fill="#ffffff" />
<line x1="510" y1="629" x2="510" y2="651" stroke="#c6c6c6" stroke-width="1" />
<line x1="565" y1="629" x2="565" y2="651" stroke="#c6c6c6" stroke-width="1" />
<rect x="510" y="649" width="55" height="2" fill="#217346" />
<text x="521.0" y="644.7" font-size="11" fill="#217346" font-weight="bold" textLength="31.7" lengthAdjust="spacingAndGlyphs" stroke="#217346" stroke-width="0.3">Dash1</text>
<circle cx="985.5" cy="642" r="6.3" fill="none" stroke="#6b6b6b" stroke-width="1.1"/>
<line x1="982" y1="642" x2="989" y2="642" stroke="#6b6b6b" stroke-width="1.3" />
<line x1="985.5" y1="638.5" x2="985.5" y2="645.5" stroke="#6b6b6b" stroke-width="1.3" />
<rect x="1037.3" y="637.5" width="1.5" height="1.5" fill="#a0a0a0" />
<rect x="1037.3" y="641.5" width="1.5" height="1.5" fill="#a0a0a0" />
<rect x="1037.3" y="645.5" width="1.5" height="1.5" fill="#a0a0a0" />
<rect x="1152" y="635.5" width="14" height="13" fill="#dcdcdc" />
<rect x="1052.5" y="635.5" width="98" height="13" fill="#ffffff" stroke="#c6c6c6" stroke-width="1" />
<line x1="1065" y1="635.5" x2="1065" y2="648.5" stroke="#c6c6c6" stroke-width="1" />
<path d="M1061,639 L1057.5,642 L1061,645 Z" fill="#444"/>
<rect x="1167.5" y="635.5" width="13" height="13" fill="#ffffff" stroke="#c6c6c6" stroke-width="1" />
<path d="M1172.5,639 L1176,642 L1172.5,645 Z" fill="#444"/>
<rect x="1183.5" y="182.5" width="14" height="14" fill="#ffffff" stroke="#c6c6c6" stroke-width="1" />
<path d="M1187,191.5 L1190.5,188 L1194,191.5 Z" fill="#444"/>
<rect x="1184.5" y="197" width="12" height="278" fill="#ffffff" stroke="#c6c6c6" stroke-width="1" />
<rect x="1184" y="617.5" width="13" height="11" fill="#ffffff" stroke="#c6c6c6" stroke-width="1" />
<path d="M1187,621 L1190.5,624.5 L1194,621 Z" fill="#444"/>
<text x="6.7" y="667.7" font-size="11" fill="#333" font-weight="normal" textLength="29.1" lengthAdjust="spacingAndGlyphs" stroke="#333" stroke-width="0.15">Pronto</text>
<circle cx="57.5" cy="659.5" r="2.3" fill="#555"/>
<rect x="56.5" y="661.5" width="9" height="6.5" fill="none" stroke="#666" stroke-width="0.9" />
<line x1="57" y1="663.8" x2="65.5" y2="663.8" stroke="#888" stroke-width="0.6" />
<line x1="57" y1="665.8" x2="65.5" y2="665.8" stroke="#888" stroke-width="0.6" />
<line x1="59.5" y1="661.5" x2="59.5" y2="668" stroke="#888" stroke-width="0.6" />
<line x1="62.5" y1="661.5" x2="62.5" y2="668" stroke="#888" stroke-width="0.6" />
<rect x="954.5" y="654.5" width="32.5" height="17.5" fill="#c8c8c8" />
<rect x="965" y="658" width="11" height="10" fill="none" stroke="#555" stroke-width="1" />
<line x1="968.7" y1="658" x2="968.7" y2="668" stroke="#555" stroke-width="0.8" />
<line x1="972.3" y1="658" x2="972.3" y2="668" stroke="#555" stroke-width="0.8" />
<line x1="965" y1="661.3" x2="976" y2="661.3" stroke="#555" stroke-width="0.8" />
<line x1="965" y1="664.7" x2="976" y2="664.7" stroke="#555" stroke-width="0.8" />
<rect x="998" y="658" width="11.5" height="10" fill="none" stroke="#555" stroke-width="1" />
<rect x="1000.5" y="660.5" width="6.5" height="5" fill="none" stroke="#777" stroke-width="0.8" />
<rect x="1031.5" y="658" width="12" height="10" fill="none" stroke="#555" stroke-width="1" />
<path d="M1034.5,658 V662.5 H1038.5 V658" fill="none" stroke="#555" stroke-width="1"/>
<line x1="1058.5" y1="663.5" x2="1064" y2="663.5" stroke="#444" stroke-width="1.5" />
<line x1="1067.5" y1="663.5" x2="1155" y2="663.5" stroke="#bdbdbd" stroke-width="1" />
<rect x="1105" y="658.5" width="4.5" height="10" fill="#555" />
<line x1="1158.5" y1="663.5" x2="1164.5" y2="663.5" stroke="#444" stroke-width="1.5" />
<line x1="1161.5" y1="660.5" x2="1161.5" y2="666.5" stroke="#444" stroke-width="1.5" />
<text x="1174.5" y="667.3" font-size="10.5" fill="#444" font-weight="normal" textLength="18.0" lengthAdjust="spacingAndGlyphs" stroke="#444" stroke-width="0.15">90%</text>
<path d="M185.7,8.7 H197.5 L199.3,10.5 V21 H185.7 Z" fill="none" stroke="#e6f2ea" stroke-width="1.3"/>
<rect x="188.5" y="8.7" width="8.5" height="5" fill="none" stroke="#e6f2ea" stroke-width="1.2"/>
<rect x="189.3" y="16.5" width="7" height="4.5" fill="none" stroke="#e6f2ea" stroke-width="1.2"/>
<path d="M214,12.5 H219.5 A3.8,3.8 0 0 1 219.5,20.5 H216.5" fill="none" stroke="#5a9a73" stroke-width="1.2"/>
<path d="M216.5,9.5 L213.5,12.5 L216.5,15.5" fill="none" stroke="#5a9a73" stroke-width="1.2"/>
<path d="M229.5,13.5 H233 L231.25,15.5 Z" fill="#5a9a73"/>
<path d="M253,12.5 H247.5 A3.8,3.8 0 0 0 247.5,20.5 H250.5" fill="none" stroke="#5a9a73" stroke-width="1.2"/>
<path d="M250.5,9.5 L253.5,12.5 L250.5,15.5" fill="none" stroke="#5a9a73" stroke-width="1.2"/>
<path d="M259.7,13.5 H263.2 L261.45,15.5 Z" fill="#5a9a73"/>
<path d="M277,21 H274.6 V8.6 H280.5 L285.5,13.5 V15" fill="none" stroke="#e6f2ea" stroke-width="1.2"/>
<path d="M280.5,8.6 V13.5 H285.5" fill="none" stroke="#e6f2ea" stroke-width="1.1"/>
<rect x="278.5" y="16" width="8.5" height="4" fill="none" stroke="#e6f2ea" stroke-width="1.1"/>
<rect x="280.5" y="14.5" width="4.5" height="7" fill="none" stroke="#e6f2ea" stroke-width="1.1"/>
<rect x="298" y="9.8" width="14" height="9.8" fill="none" stroke="#5a9a73" stroke-width="1"/>
<circle cx="305" cy="14.8" r="2.8" fill="none" stroke="#5a9a73" stroke-width="1"/>
<rect x="299.5" y="11.2" width="2" height="1.5" fill="#5a9a73" />
<rect x="329.5" y="11.5" width="4.5" height="1.2" fill="#e6f2ea" />
<path d="M329,14 H334.5 L331.75,17 Z" fill="#e6f2ea"/>
<rect x="1052.5" y="10.5" width="11.5" height="8" fill="none" stroke="#e6f2ea" stroke-width="1.1"/>
<rect x="1053" y="11" width="10.5" height="2" fill="#e6f2ea" />
<path d="M1056,16 L1058.2,14 L1060.5,16" fill="none" stroke="#e6f2ea" stroke-width="1"/>
<line x1="1094.2" y1="14.5" x2="1103.8" y2="14.5" stroke="#e6f2ea" stroke-width="1" />
<rect x="1135" y="11.8" width="7" height="7" fill="none" stroke="#e6f2ea" stroke-width="1"/>
<path d="M1137,11.8 V10.2 H1144 V17 H1142" fill="none" stroke="#e6f2ea" stroke-width="1"/>
<line x1="1175" y1="10.5" x2="1184.3" y2="19" stroke="#e6f2ea" stroke-width="1.1" />
<line x1="1184.3" y1="10.5" x2="1175" y2="19" stroke="#e6f2ea" stroke-width="1.1" />
<circle cx="744.5" cy="41.5" r="4" fill="none" stroke="#444" stroke-width="1.1"/>
<line x1="741.5" y1="44.7" x2="737" y2="49.3" stroke="#444" stroke-width="1.2" />
<path d="M1098,40.5 V48.5 H1107 V45" fill="none" stroke="#217346" stroke-width="1"/>
<path d="M1100.5,46 C1101,42 1103,40.5 1106.5,40.5" fill="none" stroke="#217346" stroke-width="1"/>
<path d="M1104.5,38.5 L1107,40.5 L1104.5,42.5" fill="none" stroke="#217346" stroke-width="1"/>
<path d="M24,67.5 H21.5 V89 H32" fill="none" stroke="#c2c2c2" stroke-width="1.3"/>
<path d="M36,67.5 H38.5 V72.5" fill="none" stroke="#c2c2c2" stroke-width="1.3"/>
<path d="M25,68.5 V65.5 H28 L30,63.5 L32,65.5 H35 V68.5 Z" fill="none" stroke="#c2c2c2" stroke-width="1.2"/>
<rect x="33" y="73.5" width="11.5" height="15.5" fill="#f3f3f3" stroke="#c2c2c2" stroke-width="1.3"/>
<line x1="35.5" y1="77.5" x2="42" y2="77.5" stroke="#c2c2c2" stroke-width="1" />
<line x1="35.5" y1="80.5" x2="42" y2="80.5" stroke="#c2c2c2" stroke-width="1" />
<line x1="35.5" y1="83.5" x2="42" y2="83.5" stroke="#c2c2c2" stroke-width="1" />
<path d="M28,111.3 H32 L30,113.7 Z" fill="#b0b0b0"/>
<line x1="55.5" y1="63.5" x2="61.5" y2="73" stroke="#262626" stroke-width="1.1" />
<line x1="61.5" y1="63.5" x2="55.5" y2="73" stroke="#262626" stroke-width="1.1" />
<circle cx="55.5" cy="74.5" r="1.4" fill="none" stroke="#2f7bc4" stroke-width="1.1"/>
<circle cx="61.5" cy="74.5" r="1.4" fill="none" stroke="#2f7bc4" stroke-width="1.1"/>
<path d="M55,95.5 H52.3 V83.8 H58.5" fill="none" stroke="#262626" stroke-width="1.1"/>
<path d="M56.5,86 H62.5 L65.8,89.3 V97.3 H56.5 Z" fill="none" stroke="#262626" stroke-width="1.1"/>
<line x1="58.5" y1="92" x2="63.5" y2="92" stroke="#262626" stroke-width="0.9" />
<line x1="58.5" y1="94.5" x2="63.5" y2="94.5" stroke="#262626" stroke-width="0.9" />
<path d="M71,89.3 H75 L73,91.7 Z" fill="#444"/>
<path d="M57.5,108.8 L61.7,113 L57,117.2 Q54,115.5 52.3,112.2 Z" fill="#fbd3a6" stroke="#f0a050" stroke-width="1"/>
<path d="M57.8,108.5 L60.5,105.8 L64.7,110 L62,112.7" fill="none" stroke="#262626" stroke-width="1.1"/>
<path d="M61.2,106.8 L65,103 Q66.5,103.5 67,105 L63.2,108.8" fill="none" stroke="#262626" stroke-width="1.1"/>
<path d="M83,137 V131 H89" fill="none" stroke="#a0a0a0" stroke-width="0.8"/>
<line x1="85.5" y1="133.5" x2="88.5" y2="136.5" stroke="#a0a0a0" stroke-width="0.8" />
<path d="M266,137 V131 H272" fill="none" stroke="#a0a0a0" stroke-width="0.8"/>
<line x1="268.5" y1="133.5" x2="271.5" y2="136.5" stroke="#a0a0a0" stroke-width="0.8" />
<path d="M563,137 V131 H569" fill="none" stroke="#a0a0a0" stroke-width="0.8"/>
<line x1="565.5" y1="133.5" x2="568.5" y2="136.5" stroke="#a0a0a0" stroke-width="0.8" />
<path d="M686,137 V131 H692" fill="none" stroke="#a0a0a0" stroke-width="0.8"/>
<line x1="688.5" y1="133.5" x2="691.5" y2="136.5" stroke="#a0a0a0" stroke-width="0.8" />
<path d="M186.3,75.18 H190.7 L188.5,77.82 Z" fill="#444"/>
<path d="M223.60000000000002,75.18 H228.0 L225.8,77.82 Z" fill="#444"/>
<text x="238.0" y="81.0" font-size="11.5" fill="#a6a6a6" font-weight="normal" textLength="9.0" lengthAdjust="spacingAndGlyphs" stroke="#a6a6a6" stroke-width="0.15">A</text>
<path d="M247,73 L248.5,71.5 L250,73" fill="none" stroke="#a6a6a6" stroke-width="0.8"/>
<text x="257.0" y="81.0" font-size="11.5" fill="#a6a6a6" font-weight="normal" textLength="9.0" lengthAdjust="spacingAndGlyphs" stroke="#a6a6a6" stroke-width="0.15">A</text>
<path d="M266.5,71.5 L268,73 L269.5,71.5" fill="none" stroke="#a6a6a6" stroke-width="0.8"/>
<text x="102.7" y="108.0" font-size="12" fill="#a6a6a6" font-weight="bold" textLength="8.7" lengthAdjust="spacingAndGlyphs" stroke="#a6a6a6" stroke-width="0.3">N</text>
<text x="124" y="108" font-size="12" fill="#a6a6a6" font-style="italic" font-family="Liberation Serif" stroke="#a6a6a6" stroke-width="0.15">I</text>
<text x="142.2" y="107.0" font-size="11" fill="#a6a6a6" font-weight="normal" textLength="7.2" lengthAdjust="spacingAndGlyphs" stroke="#a6a6a6" stroke-width="0.15">S</text>
<line x1="142" y1="110" x2="149.5" y2="110" stroke="#a6a6a6" stroke-width="1" />
<path d="M157.7,103.3 H161.7 L159.7,105.7 Z" fill="#b0b0b0"/>
<line x1="170" y1="96" x2="170" y2="113" stroke="#d0d0d0" stroke-width="1" />
<line x1="207.5" y1="96" x2="207.5" y2="113" stroke="#d0d0d0" stroke-width="1" />
<rect x="176.8" y="97.8" width="12.5" height="12.5" fill="none" stroke="#a6a6a6" stroke-width="1" stroke-dasharray="1.5,1"/>
<line x1="183" y1="97.8" x2="183" y2="110.3" stroke="#a6a6a6" stroke-width="0.8" />
<line x1="176.8" y1="104" x2="189.3" y2="104" stroke="#a6a6a6" stroke-width="0.8" />
<path d="M195.7,103.3 H199.7 L197.7,105.7 Z" fill="#b0b0b0"/>
<path d="M216.5,103 L220.5,99 L224.5,103 L220.5,107 Z" fill="none" stroke="#a6a6a6" stroke-width="1"/>
<path d="M221,99 C222.5,97 225,97.5 226,100" fill="none" stroke="#a6a6a6" stroke-width="1"/>
<rect x="214.3" y="108.5" width="13.7" height="2.5" fill="#a6a6a6" />
<path d="M233.7,103.3 H237.7 L235.7,105.7 Z" fill="#b0b0b0"/>
<text x="245.5" y="106.5" font-size="11.5" fill="#a6a6a6" font-weight="normal" textLength="10.5" lengthAdjust="spacingAndGlyphs" stroke="#a6a6a6" stroke-width="0.15">A</text>
<rect x="243.9" y="108.5" width="13.9" height="2.5" fill="#a6a6a6" />
<path d="M263.4,103.3 H267.4 L265.4,105.7 Z" fill="#b0b0b0"/>
<line x1="283" y1="69.5" x2="295" y2="69.5" stroke="#a6a6a6" stroke-width="1" />
<line x1="285" y1="73" x2="293" y2="73" stroke="#a6a6a6" stroke-width="1" />
<line x1="283" y1="76.5" x2="295" y2="76.5" stroke="#a6a6a6" stroke-width="1" />
<line x1="302.5" y1="72.5" x2="314.5" y2="72.5" stroke="#a6a6a6" stroke-width="1" />
<line x1="304.5" y1="76" x2="312.5" y2="76" stroke="#a6a6a6" stroke-width="1" />
<line x1="302.5" y1="79.5" x2="314.5" y2="79.5" stroke="#a6a6a6" stroke-width="1" />
<line x1="321" y1="76.5" x2="333" y2="76.5" stroke="#a6a6a6" stroke-width="1" />
<line x1="323" y1="80" x2="331" y2="80" stroke="#a6a6a6" stroke-width="1" />
<line x1="321" y1="83.5" x2="333" y2="83.5" stroke="#a6a6a6" stroke-width="1" />
<line x1="341.6" y1="68" x2="341.6" y2="85" stroke="#d0d0d0" stroke-width="1" />
<text x="348" y="79" font-size="8" fill="#a6a6a6" transform="rotate(-40 352 76)" stroke="#a6a6a6" stroke-width="0.15">ab</text>
<path d="M353,82 L361,74 M358,74 H361 V77" fill="none" stroke="#a6a6a6" stroke-width="1"/>
<path d="M365,75.3 H369 L367,77.7 Z" fill="#b0b0b0"/>
<line x1="387.5" y1="62" x2="387.5" y2="117" stroke="#d9d9d9" stroke-width="1" />
<text x="396" y="76" font-size="7.5" fill="#a6a6a6" stroke="#a6a6a6" stroke-width="0.15">ab</text>
<text x="396" y="83" font-size="7.5" fill="#a6a6a6" stroke="#a6a6a6" stroke-width="0.15">c</text>
<path d="M401,80 H405 A1.8,1.8 0 0 0 405,76.5 H400" fill="none" stroke="#a6a6a6" stroke-width="0.9"/>
<line x1="283" y1="98" x2="295" y2="98" stroke="#a6a6a6" stroke-width="1" />
<line x1="283" y1="101.5" x2="291" y2="101.5" stroke="#a6a6a6" stroke-width="1" />
<line x1="283" y1="105" x2="295" y2="105" stroke="#a6a6a6" stroke-width="1" />
<line x1="283" y1="108.5" x2="291" y2="108.5" stroke="#a6a6a6" stroke-width="1" />
<line x1="302" y1="98" x2="314" y2="98" stroke="#a6a6a6" stroke-width="1" />
<line x1="304" y1="101.5" x2="312" y2="101.5" stroke="#a6a6a6" stroke-width="1" />
<line x1="302" y1="105" x2="314" y2="105" stroke="#a6a6a6" stroke-width="1" />
<line x1="304" y1="108.5" x2="312" y2="108.5" stroke="#a6a6a6" stroke-width="1" />
<line x1="321" y1="98" x2="333" y2="98" stroke="#a6a6a6" stroke-width="1" />
<line x1="325" y1="101.5" x2="333" y2="101.5" stroke="#a6a6a6" stroke-width="1" />
<line x1="321" y1="105" x2="333" y2="105" stroke="#a6a6a6" stroke-width="1" />
<line x1="325" y1="108.5" x2="333" y2="108.5" stroke="#a6a6a6" stroke-width="1" />
<line x1="341.6" y1="96" x2="341.6" y2="113" stroke="#d0d0d0" stroke-width="1" />
<line x1="348.5" y1="98" x2="360.5" y2="98" stroke="#a6a6a6" stroke-width="1" />
<line x1="354.5" y1="101.5" x2="360.5" y2="101.5" stroke="#a6a6a6" stroke-width="1" />
<line x1="354.5" y1="105" x2="360.5" y2="105" stroke="#a6a6a6" stroke-width="1" />
<line x1="348.5" y1="108.5" x2="360.5" y2="108.5" stroke="#a6a6a6" stroke-width="1" />
<path d="M354,103 H349.5 M351.5,101 L349.5,103 L351.5,105" fill="none" stroke="#a6a6a6" stroke-width="0.9"/>
<line x1="368" y1="98" x2="380" y2="98" stroke="#a6a6a6" stroke-width="1" />
<line x1="374" y1="101.5" x2="380" y2="101.5" stroke="#a6a6a6" stroke-width="1" />
<line x1="374" y1="105" x2="380" y2="105" stroke="#a6a6a6" stroke-width="1" />
<line x1="368" y1="108.5" x2="380" y2="108.5" stroke="#a6a6a6" stroke-width="1" />
<path d="M368,103 H373 M371,101 L373,103 L371,105" fill="none" stroke="#a6a6a6" stroke-width="0.9"/>
<rect x="394.5" y="97.5" width="13" height="13" fill="none" stroke="#a6a6a6" stroke-width="1"/>
<line x1="394.5" y1="100.5" x2="407.5" y2="100.5" stroke="#a6a6a6" stroke-width="0.8" />
<line x1="394.5" y1="107.5" x2="407.5" y2="107.5" stroke="#a6a6a6" stroke-width="0.8" />
<path d="M397,104 H405 M399,102.5 L397,104 L399,105.5 M403,102.5 L405,104 L403,105.5" fill="none" stroke="#a6a6a6" stroke-width="0.8"/>
<path d="M515.5,104.3 H519.5 L517.5,106.7 Z" fill="#b8b8b8"/>
<path d="M683.5,75.8 H687.5 L685.5,78.2 Z" fill="#b0b0b0"/>
<rect x="580" y="100" width="11" height="8" fill="none" stroke="#a6a6a6" stroke-width="1"/>
<text x="581.5" y="106.5" font-size="6" fill="#a6a6a6" stroke="#a6a6a6" stroke-width="0.15">cn</text>
<rect x="588" y="104" width="6" height="7" rx="1.5" fill="#f3f3f3" stroke="#a6a6a6" stroke-width="1"/>
<path d="M599.4,103.8 H603.4 L601.4,106.2 Z" fill="#444"/>
<text x="610.0" y="111.0" font-size="15" fill="#a6a6a6" font-weight="normal" textLength="13.0" lengthAdjust="spacingAndGlyphs" stroke="#a6a6a6" stroke-width="0.15">%</text>
<text x="628.7" y="108.0" font-size="8.5" fill="#a6a6a6" font-weight="normal" textLength="14.1" lengthAdjust="spacingAndGlyphs" stroke="#a6a6a6" stroke-width="0.15">000</text>
<line x1="649.7" y1="97" x2="649.7" y2="113" stroke="#d0d0d0" stroke-width="1" />
<text x="662" y="103.5" font-size="7" fill="#a6a6a6" stroke="#a6a6a6" stroke-width="0.15">0</text><text x="659" y="111" font-size="7" fill="#a6a6a6" stroke="#a6a6a6" stroke-width="0.15">.00</text>
<path d="M661,101 H656.5 M658.5,99 L656.5,101 L658.5,103" fill="none" stroke="#a6a6a6" stroke-width="0.9"/>
<text x="679" y="103.5" font-size="7" fill="#a6a6a6" stroke="#a6a6a6" stroke-width="0.15">.00</text><text x="684" y="111" font-size="7" fill="#a6a6a6" stroke="#a6a6a6" stroke-width="0.15">0</text>
<path d="M676,108.5 H682 M680,106.5 L682,108.5 L680,110.5" fill="none" stroke="#a6a6a6" stroke-width="0.9"/>
<rect x="725" y="69.5" width="13" height="11" fill="#d6d6d6" />
<rect x="721.5" y="66.5" width="24" height="18" fill="none" stroke="#a6a6a6" stroke-width="1"/>
<line x1="727.5" y1="66.5" x2="727.5" y2="84.5" stroke="#a6a6a6" stroke-width="0.8" />
<line x1="733.5" y1="66.5" x2="733.5" y2="84.5" stroke="#a6a6a6" stroke-width="0.8" />
<line x1="739.5" y1="66.5" x2="739.5" y2="84.5" stroke="#a6a6a6" stroke-width="0.8" />
<line x1="721.5" y1="72.5" x2="745.5" y2="72.5" stroke="#a6a6a6" stroke-width="0.8" />
<line x1="721.5" y1="78.5" x2="745.5" y2="78.5" stroke="#a6a6a6" stroke-width="0.8" />
<rect x="797" y="72" width="14" height="11" fill="#d6d6d6" />
<rect x="793.5" y="66.5" width="25" height="18" fill="none" stroke="#a6a6a6" stroke-width="1"/>
<line x1="799.75" y1="66.5" x2="799.75" y2="84.5" stroke="#a6a6a6" stroke-width="0.8" />
<line x1="806.0" y1="66.5" x2="806.0" y2="84.5" stroke="#a6a6a6" stroke-width="0.8" />
<line x1="812.25" y1="66.5" x2="812.25" y2="84.5" stroke="#a6a6a6" stroke-width="0.8" />
<line x1="793.5" y1="72.5" x2="818.5" y2="72.5" stroke="#a6a6a6" stroke-width="0.8" />
<line x1="793.5" y1="78.5" x2="818.5" y2="78.5" stroke="#a6a6a6" stroke-width="0.8" />
<path d="M820.5,72 L811,81.5" stroke="#a6a6a6" stroke-width="2.4" stroke-linecap="round"/>
<path d="M811.5,80 C808,81 806,84 801,88.5 C806,89 810,87.5 812.5,83 Z" fill="#a6a6a6" stroke="#f3f3f3" stroke-width="0.6"/>
<rect x="859" y="69.5" width="17" height="12" fill="#d6d6d6" />
<rect x="856.5" y="66.5" width="24" height="18" fill="none" stroke="#a6a6a6" stroke-width="1"/>
<line x1="856.5" y1="69.5" x2="880.5" y2="69.5" stroke="#a6a6a6" stroke-width="0.8" />
<line x1="859" y1="66.5" x2="859" y2="84.5" stroke="#a6a6a6" stroke-width="0.8" />
<path d="M882.5,72 L873,81.5" stroke="#a6a6a6" stroke-width="2.4" stroke-linecap="round"/>
<path d="M873.5,80 C870,81 868,84 863,88.5 C868,89 872,87.5 874.5,83 Z" fill="#a6a6a6" stroke="#f3f3f3" stroke-width="0.6"/>
<path d="M761.2,112.42 H764.8 L763,114.58 Z" fill="#c0c0c0"/>
<path d="M820.2,112.42 H823.8 L822,114.58 Z" fill="#c0c0c0"/>
<path d="M881.2,112.42 H884.8 L883,114.58 Z" fill="#c0c0c0"/>
<rect x="906" y="66" width="25" height="18.5" fill="none" stroke="#a6a6a6" stroke-width="1"/>
<line x1="914.3333333333334" y1="66" x2="914.3333333333334" y2="84.5" stroke="#a6a6a6" stroke-width="0.8" />
<line x1="922.6666666666666" y1="66" x2="922.6666666666666" y2="84.5" stroke="#a6a6a6" stroke-width="0.8" />
<line x1="906" y1="72.16666666666667" x2="931" y2="72.16666666666667" stroke="#a6a6a6" stroke-width="0.8" />
<line x1="906" y1="78.33333333333333" x2="931" y2="78.33333333333333" stroke="#a6a6a6" stroke-width="0.8" />
<path d="M905,75.5 L910,70.5 V73.5 H931 V77.5 H910 V80.5 Z" fill="#d0d0d0" stroke="#a6a6a6" stroke-width="0.8"/>
<rect x="942.5" y="66" width="25" height="18.5" fill="none" stroke="#a6a6a6" stroke-width="1"/>
<line x1="950.8333333333334" y1="66" x2="950.8333333333334" y2="84.5" stroke="#a6a6a6" stroke-width="0.8" />
<line x1="959.1666666666666" y1="66" x2="959.1666666666666" y2="84.5" stroke="#a6a6a6" stroke-width="0.8" />
<line x1="942.5" y1="72.16666666666667" x2="967.5" y2="72.16666666666667" stroke="#a6a6a6" stroke-width="0.8" />
<line x1="942.5" y1="78.33333333333333" x2="967.5" y2="78.33333333333333" stroke="#a6a6a6" stroke-width="0.8" />
<rect x="946" y="72.5" width="14" height="5.5" fill="#d0d0d0" />
<line x1="958" y1="68" x2="968" y2="82" stroke="#a6a6a6" stroke-width="1" />
<line x1="968" y1="68" x2="958" y2="82" stroke="#a6a6a6" stroke-width="1" />
<rect x="990" y="72" width="12" height="6" fill="#62a8e5" />
<rect x="984.5" y="66" width="24.5" height="18.5" fill="none" stroke="#262626" stroke-width="1.1"/>
<line x1="992.6666666666666" y1="66" x2="992.6666666666666" y2="84.5" stroke="#262626" stroke-width="0.8800000000000001" />
<line x1="1000.8333333333334" y1="66" x2="1000.8333333333334" y2="84.5" stroke="#262626" stroke-width="0.8800000000000001" />
<line x1="984.5" y1="72.16666666666667" x2="1009.0" y2="72.16666666666667" stroke="#262626" stroke-width="0.8800000000000001" />
<line x1="984.5" y1="78.33333333333333" x2="1009.0" y2="78.33333333333333" stroke="#262626" stroke-width="0.8800000000000001" />
<line x1="989" y1="61.5" x2="1003.5" y2="61.5" stroke="#2f7bc4" stroke-width="1" />
<line x1="989" y1="60" x2="989" y2="63" stroke="#2f7bc4" stroke-width="1" />
<line x1="1003.5" y1="60" x2="1003.5" y2="63" stroke="#2f7bc4" stroke-width="1" />
<path d="M915.8,111.2 H919.8 L917.8,113.60000000000001 Z" fill="#444"/>
<path d="M952.4,111.2 H956.4 L954.4,113.60000000000001 Z" fill="#444"/>
<path d="M994.5,111.2 H998.5 L996.5,113.60000000000001 Z" fill="#444"/>
<text x="1032.0" y="74.5" font-size="15" fill="#a6a6a6" font-weight="normal" textLength="11.2" lengthAdjust="spacingAndGlyphs" stroke="#a6a6a6" stroke-width="0.15">&#931;</text>
<path d="M1049.8,67.3 H1053.8 L1051.8,69.7 Z" fill="#444"/>
<rect x="1030.8" y="82.5" width="13.5" height="12" fill="none" stroke="#262626" stroke-width="1.1"/>
<line x1="1030.8" y1="85" x2="1044.3" y2="85" stroke="#262626" stroke-width="1.1" />
<path d="M1037.5,86.5 V92 M1035,89.5 L1037.5,92 L1040,89.5" fill="none" stroke="#2f7bc4" stroke-width="1.2"/>
<path d="M1048,87.8 H1052 L1050,90.2 Z" fill="#444"/>
<path d="M1031,110 L1038,103 L1044,109 L1037,116 Z" fill="none" stroke="#262626" stroke-width="1.1"/>
<line x1="1034.5" y1="106.5" x2="1040.5" y2="112.5" stroke="#262626" stroke-width="1" />
<path d="M1048,108.3 H1052 L1050,110.7 Z" fill="#444"/>
<text x="1072.0" y="74.5" font-size="11" fill="#2f7bc4" font-weight="normal" textLength="8.0" lengthAdjust="spacingAndGlyphs" stroke="#2f7bc4" stroke-width="0.15">A</text>
<text x="1072.0" y="86.5" font-size="11" fill="#262626" font-weight="normal" textLength="8.0" lengthAdjust="spacingAndGlyphs" stroke="#262626" stroke-width="0.15">Z</text>
<path d="M1082.5,69.5 H1096 L1091,75.5 V81 L1087.5,81 V75.5 Z" fill="none" stroke="#262626" stroke-width="1.1"/>
<circle cx="1141.5" cy="72.3" r="9.2" fill="none" stroke="#262626" stroke-width="1.1"/>
<line x1="1135" y1="79" x2="1126" y2="88.3" stroke="#262626" stroke-width="1.1" />
<path d="M1100.2,112.42 H1103.8 L1102,114.58 Z" fill="#444"/>
<path d="M1162.2,112.42 H1165.8 L1164,114.58 Z" fill="#444"/>
<path d="M1183.5,135.5 L1187.25,131.5 L1191,135.5" fill="none" stroke="#444" stroke-width="1.2"/>
<path d="M82,158.5 H88 L85,162 Z" fill="#555"/>
<rect x="106.3" y="157.5" width="1.5" height="1.5" fill="#999" />
<rect x="106.3" y="161.5" width="1.5" height="1.5" fill="#999" />
<rect x="106.3" y="165.5" width="1.5" height="1.5" fill="#999" />
<line x1="133.5" y1="157.5" x2="140.5" y2="164.5" stroke="#b8b8b8" stroke-width="1.2" />
<line x1="140.5" y1="157.5" x2="133.5" y2="164.5" stroke="#b8b8b8" stroke-width="1.2" />
<path d="M164.5,161 L167.5,164.5 L174,157" fill="none" stroke="#b8b8b8" stroke-width="1.3"/>
<text x="195" y="165" font-size="11" fill="#444" font-style="italic" font-weight="bold" font-family="Liberation Serif" stroke="#444" stroke-width="0.15">f</text>
<text x="200" y="166" font-size="8" fill="#444" font-style="italic" font-family="Liberation Serif" stroke="#444" stroke-width="0.15">x</text>
<path d="M1184,159 L1187,162 L1190,159" fill="none" stroke="#555" stroke-width="1.2"/>
<path d="M10.7,194.7 H19 V186 Z" fill="#b4b4b4"/>
</svg>
</body></html>
